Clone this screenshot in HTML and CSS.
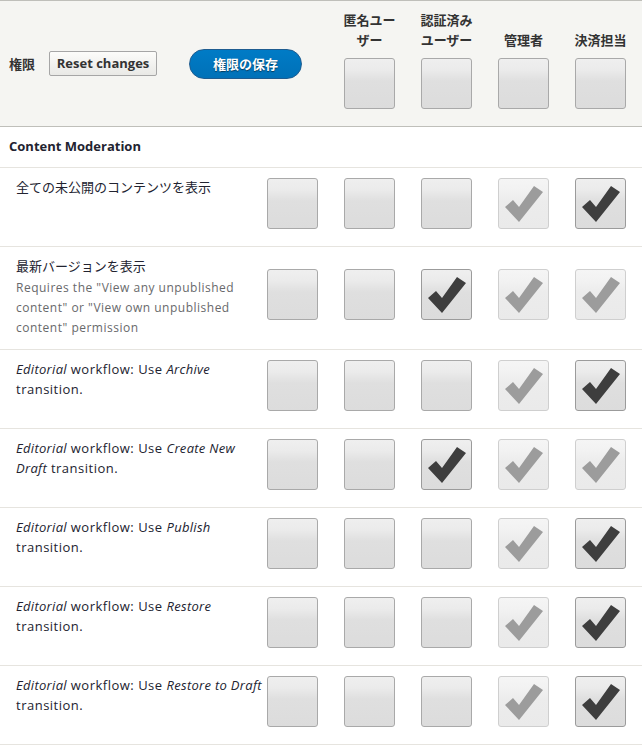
FILE: index.html
```html
<!DOCTYPE html>
<html lang="ja">
<head>
<meta charset="utf-8">
<title>権限</title>
<link rel="stylesheet" href="styles.css">
</head>
<body>
<svg width="0" height="0" class="defs">
  <defs>
    <symbol id="check" viewBox="1 1 49 49">
      <polygon points="7,29 15,22 21,29 36,8 45,14 21,44"/>
    </symbol>
  </defs>
</svg>
<div class="perm-table">
  <div class="head">
    <div class="head-main">
      <span class="head-title">権限</span>
      <button class="btn-reset">Reset changes</button>
      <button class="btn-save">権限の保存</button>
    </div>
    <div class="head-role"><div class="role-label">匿名ユー<br>ザー</div><div class="cb"></div></div>
    <div class="head-role"><div class="role-label">認証済み<br>ユーザー</div><div class="cb"></div></div>
    <div class="head-role"><div class="role-label">管理者</div><div class="cb"></div></div>
    <div class="head-role"><div class="role-label">決済担当</div><div class="cb"></div></div>
  </div>

  <div class="module-row">Content Moderation</div>

  <div class="row">
    <div class="perm">全ての未公開のコンテンツを表示</div>
    <div class="cell"><div class="cb"></div></div>
    <div class="cell"><div class="cb"></div></div>
    <div class="cell"><div class="cb"></div></div>
    <div class="cell"><div class="cb dis"><svg><use href="#check"/></svg></div></div>
    <div class="cell"><div class="cb on"><svg><use href="#check"/></svg></div></div>
  </div>

  <div class="row">
    <div class="perm">最新バージョンを表示<div class="desc">Requires the "View any unpublished content" or "View own unpublished content" permission</div></div>
    <div class="cell"><div class="cb"></div></div>
    <div class="cell"><div class="cb"></div></div>
    <div class="cell"><div class="cb on"><svg><use href="#check"/></svg></div></div>
    <div class="cell"><div class="cb dis"><svg><use href="#check"/></svg></div></div>
    <div class="cell"><div class="cb dis"><svg><use href="#check"/></svg></div></div>
  </div>

  <div class="row">
    <div class="perm latin"><em>Editorial</em> workflow: Use <em>Archive</em> transition.</div>
    <div class="cell"><div class="cb"></div></div>
    <div class="cell"><div class="cb"></div></div>
    <div class="cell"><div class="cb"></div></div>
    <div class="cell"><div class="cb dis"><svg><use href="#check"/></svg></div></div>
    <div class="cell"><div class="cb on"><svg><use href="#check"/></svg></div></div>
  </div>

  <div class="row">
    <div class="perm latin"><em>Editorial</em> workflow: Use <em>Create New</em> <em>Draft</em> transition.</div>
    <div class="cell"><div class="cb"></div></div>
    <div class="cell"><div class="cb"></div></div>
    <div class="cell"><div class="cb on"><svg><use href="#check"/></svg></div></div>
    <div class="cell"><div class="cb dis"><svg><use href="#check"/></svg></div></div>
    <div class="cell"><div class="cb dis"><svg><use href="#check"/></svg></div></div>
  </div>

  <div class="row">
    <div class="perm latin"><em>Editorial</em> workflow: Use <em>Publish</em> transition.</div>
    <div class="cell"><div class="cb"></div></div>
    <div class="cell"><div class="cb"></div></div>
    <div class="cell"><div class="cb"></div></div>
    <div class="cell"><div class="cb dis"><svg><use href="#check"/></svg></div></div>
    <div class="cell"><div class="cb on"><svg><use href="#check"/></svg></div></div>
  </div>

  <div class="row">
    <div class="perm latin"><em>Editorial</em> workflow: Use <em>Restore</em> transition.</div>
    <div class="cell"><div class="cb"></div></div>
    <div class="cell"><div class="cb"></div></div>
    <div class="cell"><div class="cb"></div></div>
    <div class="cell"><div class="cb dis"><svg><use href="#check"/></svg></div></div>
    <div class="cell"><div class="cb on"><svg><use href="#check"/></svg></div></div>
  </div>

  <div class="row">
    <div class="perm latin"><em>Editorial</em> workflow: Use <em>Restore to Draft</em> transition.</div>
    <div class="cell"><div class="cb"></div></div>
    <div class="cell"><div class="cb"></div></div>
    <div class="cell"><div class="cb"></div></div>
    <div class="cell"><div class="cb dis"><svg><use href="#check"/></svg></div></div>
    <div class="cell"><div class="cb on"><svg><use href="#check"/></svg></div></div>
  </div>
</div>
</body>
</html>
```
FILE: styles.css
```css
html, body {
  margin: 0;
  padding: 0;
  background: #fff;
}
body {
  font-family: "Open Sans", "Noto Sans CJK JP", sans-serif;
  font-size: 13px;
  line-height: 20px;
  color: #222330;
}
.defs {
  position: absolute;
  width: 0;
  height: 0;
  overflow: hidden;
}
.perm-table {
  width: 642px;
}

/* header */
.head {
  display: grid;
  grid-template-columns: 344px 77px 77px 77px 67px;
  background: #f5f5f2;
  border-top: 1px solid #bfbfba;
  border-bottom: 1px solid #bfbfba;
}
.head-main {
  display: flex;
  align-items: center;
  padding-left: 9px;
}
.head-title {
  font-weight: 700;
  color: #333;
  margin-right: 14px;
}
.btn-reset {
  font-family: inherit;
  font-size: 13px;
  font-weight: 700;
  color: #333;
  height: 25px;
  width: 108px;
  padding: 0;
  border: 1px solid #a6a6a6;
  border-radius: 2px;
  background: linear-gradient(to bottom, #fcfcfa 0%, #e9e9e6 100%);
  line-height: 21px;
}
.btn-save {
  font-family: inherit;
  font-size: 13px;
  font-weight: 700;
  color: #fff;
  margin-left: 32px;
  height: 30px;
  width: 113px;
  padding: 0;
  border: 1px solid #1e5c90;
  border-radius: 16px;
  background: linear-gradient(to bottom, #007bc6 0%, #0071b8 100%);
  text-shadow: 0 1px 1px rgba(0,0,0,0.5);
  line-height: 26px;
}
.head-role {
  padding: 9px 0 17px;
  display: flex;
  flex-direction: column;
}
.role-label {
  width: 51px;
  height: 40px;
  display: flex;
  align-items: flex-end;
  justify-content: center;
  text-align: center;
  white-space: nowrap;
  font-weight: 700;
  color: #333;
  margin-bottom: 8px;
}

/* module row */
.module-row {
  font-weight: 700;
  padding: 9px 9px 11px;
  border-bottom: 1px solid #e6e4df;
}

/* permission rows */
.row {
  display: grid;
  grid-template-columns: 267px 77px 77px 77px 77px 67px;
  border-bottom: 1px solid #e6e4df;
}
.perm {
  padding: 9px 0 11px 16px;
  margin-right: -2px;
}
.perm.latin {
  letter-spacing: 0.5px;
}
.perm em {
  font-style: italic;
  letter-spacing: 0.3px;
}
.desc {
  font-size: 12px;
  line-height: 20px;
  color: #68696b;
  margin-top: 2px;
  letter-spacing: 0.5px;
}
.cell {
  display: flex;
  align-items: center;
  padding: 10px 0 17px;
}

/* checkbox */
.cb {
  box-sizing: border-box;
  width: 51px;
  height: 51px;
  border: 1px solid #a9a9a9;
  border-radius: 3px;
  background: linear-gradient(to bottom, #efefef 0%, #ebebeb 22%, #dfdfdf 45%, #dcdcdc 100%);
  flex: none;
}
.cb svg {
  display: block;
  width: 49px;
  height: 49px;
}
.cb.on {
  border-color: #9b9b9b;
}
.cb.on svg {
  fill: #3e3e3e;
}
.cb.dis {
  border-color: #cfcfcf;
  background: linear-gradient(to bottom, #f5f5f5 0%, #f2f2f2 22%, #ececec 45%, #eaeaea 100%);
}
.cb.dis svg {
  fill: #9c9c9c;
}
```
